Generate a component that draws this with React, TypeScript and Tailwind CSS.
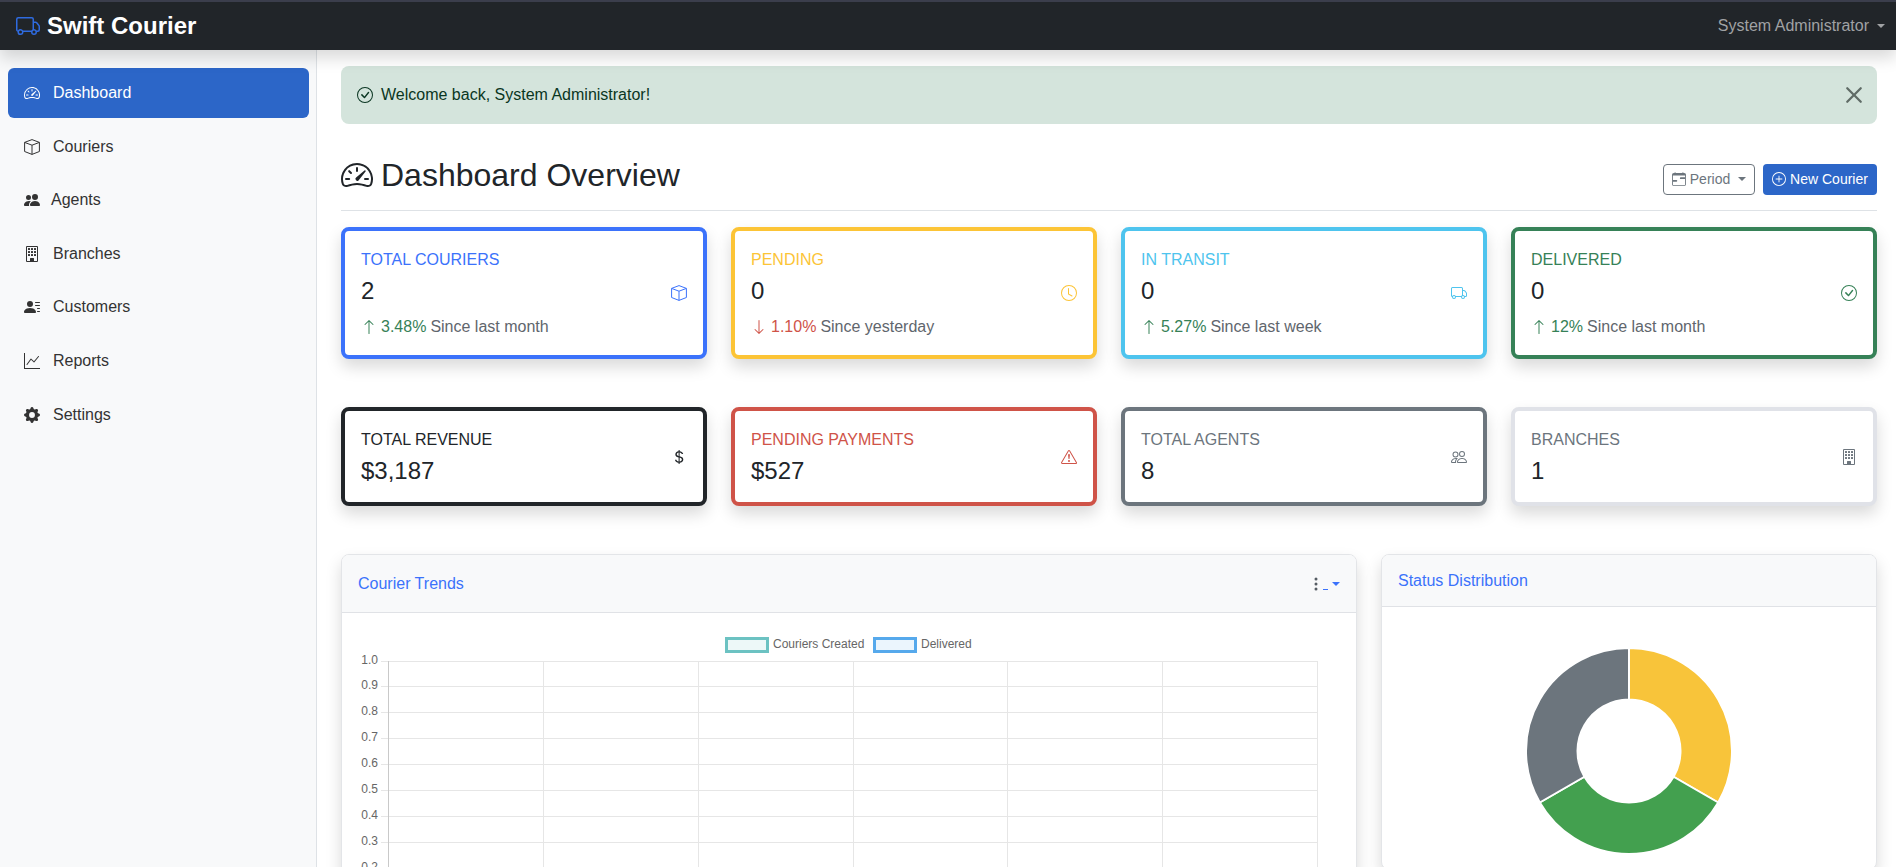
import {
  BsArrowDown,
  BsArrowUp,
  BsBuilding,
  BsCalendarRange,
  BsCheckCircle,
  BsClock,
  BsCurrencyDollar,
  BsExclamationTriangle,
  BsGearFill,
  BsGraphUp,
  BsPeople,
  BsPeopleFill,
  BsPersonLinesFill,
  BsPlusCircle,
  BsSpeedometer2,
  BsThreeDotsVertical,
  BsTruck,
  BsX,
} from "react-icons/bs";

// the package's box is flatter than the one in the design
function BoxIcon({ size = 16, className }: { size?: number; className?: string }) {
  return (
    <svg
      width={size}
      height={size}
      viewBox="0 0 16 16"
      fill="none"
      stroke="currentColor"
      strokeWidth="1"
      strokeLinejoin="round"
      className={className}
    >
      <path d="M8 .6 15.4 3.4V12.5L8 15.4.6 12.5V3.4Z" />
      <path d="M.6 3.4 8 6.2l7.4-2.8M8 6.2v9.2" />
    </svg>
  );
}

const navItems = [
  { label: "Dashboard", icon: BsSpeedometer2, active: true },
  { label: "Couriers", icon: BoxIcon },
  { label: "Agents", icon: BsPeopleFill, tight: true },
  { label: "Branches", icon: BsBuilding },
  { label: "Customers", icon: BsPersonLinesFill },
  { label: "Reports", icon: BsGraphUp },
  { label: "Settings", icon: BsGearFill },
];

const topStats = [
  {
    title: "TOTAL COURIERS",
    value: "2",
    icon: BoxIcon,
    border: "border-[#3b72fb]",
    color: "text-[#3b72fb]",
    change: "3.48%",
    up: true,
    note: "Since last month",
  },
  {
    title: "PENDING",
    value: "0",
    icon: BsClock,
    border: "border-[#fcc436]",
    color: "text-[#fcc436]",
    change: "1.10%",
    up: false,
    note: "Since yesterday",
  },
  {
    title: "IN TRANSIT",
    value: "0",
    icon: BsTruck,
    border: "border-[#4ec4ee]",
    color: "text-[#4ec4ee]",
    change: "5.27%",
    up: true,
    note: "Since last week",
  },
  {
    title: "DELIVERED",
    value: "0",
    icon: BsCheckCircle,
    border: "border-[#368157]",
    color: "text-[#368157]",
    change: "12%",
    up: true,
    note: "Since last month",
  },
];

const bottomStats = [
  {
    title: "TOTAL REVENUE",
    value: "$3,187",
    icon: BsCurrencyDollar,
    border: "border-[#212529]",
    color: "text-[#212529]",
  },
  {
    title: "PENDING PAYMENTS",
    value: "$527",
    icon: BsExclamationTriangle,
    border: "border-[#cf5348]",
    color: "text-[#cf5348]",
  },
  {
    title: "TOTAL AGENTS",
    value: "8",
    icon: BsPeople,
    border: "border-[#6c757d]",
    color: "text-[#6c757d]",
  },
  {
    title: "BRANCHES",
    value: "1",
    icon: BsBuilding,
    border: "border-[#e0e2e8]",
    color: "text-[#6c757d]",
  },
];

const yTicks = [
  { label: "1.0", y: 661.5 },
  { label: "0.9", y: 686.5 },
  { label: "0.8", y: 712.5 },
  { label: "0.7", y: 738.5 },
  { label: "0.6", y: 764.5 },
  { label: "0.5", y: 790.5 },
  { label: "0.4", y: 816.5 },
  { label: "0.3", y: 842.5 },
  { label: "0.2", y: 868.5 },
];
const xGrid = [388.5, 543.5, 698.5, 853.5, 1007.5, 1162.5, 1317.5];

function TrendsChart() {
  // viewBox uses page coordinates so the numbers can be read off the screenshot
  return (
    <svg viewBox="342 613 1014 300" className="block h-[300px] w-[1014px]">
      <rect x="726.5" y="638.5" width="41" height="13" fill="#edf8f8" stroke="#6cc2c2" strokeWidth="3" />
      <text x="773" y="648" fontSize="12" fill="#666">
        Couriers Created
      </text>
      <rect x="874.5" y="638.5" width="41" height="13" fill="#ebf5fd" stroke="#56a9ec" strokeWidth="3" />
      <text x="921" y="648" fontSize="12" fill="#666">
        Delivered
      </text>
      {yTicks.map((tick) => (
        <g key={tick.label}>
          <line x1="381" x2="1318" y1={tick.y} y2={tick.y} stroke="#e6e6e6" />
          <text x="378" y={tick.y + 2.5} fontSize="12" fill="#666" textAnchor="end">
            {tick.label}
          </text>
        </g>
      ))}
      {xGrid.map((x, i) => (
        <line key={x} x1={x} x2={x} y1="661" y2="913" stroke={i === 0 ? "#c9c9c9" : "#e6e6e6"} />
      ))}
    </svg>
  );
}

function StatusDonut() {
  const cx = 1629;
  const cy = 751;
  const outer = 103;
  const inner = 51.5;
  const point = (r: number, deg: number) => {
    const a = ((deg - 90) * Math.PI) / 180;
    return `${cx + r * Math.cos(a)} ${cy + r * Math.sin(a)}`;
  };
  const slice = (from: number, to: number) =>
    `M${point(outer, from)} A${outer} ${outer} 0 0 1 ${point(outer, to)} L${point(inner, to)} A${inner} ${inner} 0 0 0 ${point(inner, from)} Z`;
  return (
    <svg viewBox="1382 607 494 262" className="block h-[262px] w-[494px]">
      <path d={slice(0, 120)} fill="#f8c43a" stroke="#fff" strokeWidth="2" />
      <path d={slice(120, 240)} fill="#43a04f" stroke="#fff" strokeWidth="2" />
      <path d={slice(240, 360)} fill="#6c757d" stroke="#fff" strokeWidth="2" />
    </svg>
  );
}

function StatCard({ stat, tall }: { stat: any; tall?: boolean }) {
  const Icon = stat.icon;
  const Arrow = stat.up ? BsArrowUp : BsArrowDown;
  return (
    <div
      className={`flex items-center justify-between rounded-lg border-4 bg-white p-4 shadow-[0_8px_16px_rgba(0,0,0,0.15)] ${stat.border} ${tall ? "h-[132px]" : "h-[99px]"}`}
    >
      <div>
        <div className={`mb-1 text-base leading-6 ${stat.color}`}>{stat.title}</div>
        <div className="h-[29px] text-2xl leading-[29px] text-[#212529]">{stat.value}</div>
        {stat.note && (
          <div className="mt-2.5 flex items-center text-base leading-6 text-[#5f666d]">
            <Arrow className={stat.up ? "text-[#368157]" : "text-[#cf5348]"} size={16} />
            <span className={`ml-1 mr-1 ${stat.up ? "text-[#368157]" : "text-[#cf5348]"}`}>{stat.change}</span>
            {stat.note}
          </div>
        )}
      </div>
      <Icon className={stat.color} size={16} />
    </div>
  );
}

export default function App() {
  return (
    <div className="flex h-screen flex-col overflow-hidden bg-white font-['Liberation_Sans',Arial,sans-serif] text-[#212529]">
      <nav className="relative z-10 flex h-[50px] shrink-0 items-center justify-between border-t-2 border-[#3b3e4c] bg-[#212529] pl-4 pr-[11px] shadow-[0_8px_16px_rgba(0,0,0,0.15)]">
        <div className="flex items-center text-2xl font-bold text-white">
          <BsTruck className="mr-[7px] text-[#2f6be0]" size={24} />
          Swift Courier
        </div>
        <div className="flex items-center text-base text-[#a0a2a4]">
          System Administrator
          <span className="ml-2 h-0 w-0 border-x-[4.8px] border-t-[4.8px] border-x-transparent border-t-[#a0a2a4]" />
        </div>
      </nav>

      <div className="flex min-h-0 flex-1">
        <aside className="w-[317px] shrink-0 border-r border-[#dee2e6] bg-[#f8f9fa] pl-2 pr-[7px] pt-[18.3px]">
          {navItems.map((item) => {
            const Icon = item.icon;
            return (
              <div
                key={item.label}
                className={`mb-1 flex h-[49.6px] items-center rounded-md pl-4 text-base ${item.active ? "bg-[#2c66c8] text-white" : "text-[#333]"}`}
              >
                <Icon size={16} className={item.tight ? "mr-[11px]" : "mr-[13px]"} />
                {item.label}
              </div>
            );
          })}
        </aside>

        <main className="min-w-0 flex-1 overflow-hidden pl-6 pr-[19px] pt-4">
          <div className="mb-4 flex h-[58px] items-center justify-between rounded-lg bg-[#d4e4dc] pl-4 pr-[5px] text-base text-[#0a3622]">
            <div className="flex items-center">
              <BsCheckCircle size={16} className="mr-2" />
              Welcome back, System Administrator!
            </div>
            <BsX size={36} className="text-[#5f6b66]" />
          </div>

          <div className="mb-4 flex items-center justify-between border-b border-[#dee2e6] pb-2 pt-4">
            <h1 className="mb-2 flex items-center text-[32px] leading-[38.4px] text-[#212529]">
              <BsSpeedometer2 size={32} className="mr-2" />
              Dashboard Overview
            </h1>
            <div className="flex gap-2 text-sm">
              <div className="flex h-[31px] w-[92px] items-center justify-center rounded border border-[#6c757d] text-[#6c757d]">
                <BsCalendarRange size={14} className="mr-1" />
                Period
                <span className="ml-2 h-0 w-0 border-x-[4.2px] border-t-[4.2px] border-x-transparent border-t-[#6c757d]" />
              </div>
              <div className="flex h-[31px] w-[114px] items-center justify-center rounded bg-[#2c66c8] text-white">
                <BsPlusCircle size={14} className="mr-1" />
                New Courier
              </div>
            </div>
          </div>

          <div className="mb-12 grid grid-cols-4 gap-6">
            {topStats.map((stat) => (
              <StatCard key={stat.title} stat={stat} tall />
            ))}
          </div>

          <div className="mb-12 grid grid-cols-4 gap-6">
            {bottomStats.map((stat) => (
              <StatCard key={stat.title} stat={stat} />
            ))}
          </div>

          <div className="flex items-start gap-6">
            <div className="w-[1016px] shrink-0 overflow-hidden rounded-lg border border-[#e3e5e8] bg-white shadow-[0_8px_16px_rgba(0,0,0,0.15)]">
              <div className="flex h-[58px] items-center justify-between border-b border-[#e0e2e6] bg-[#f8f9fa] pl-4 pr-4 text-base text-[#3b72fb]">
                Courier Trends
                <div className="flex items-center">
                  <BsThreeDotsVertical size={16} className="text-[#555c63]" />
                  <span className="ml-[-1px] mt-3 h-px w-[5px] bg-[#3b72fb]" />
                  <span className="ml-1 h-0 w-0 border-x-[4.8px] border-t-[4.8px] border-x-transparent border-t-[#3b72fb]" />
                </div>
              </div>
              <TrendsChart />
            </div>
            <div className="w-[496px] shrink-0 overflow-hidden rounded-lg border border-[#e3e5e8] bg-white shadow-[0_8px_16px_rgba(0,0,0,0.15)]">
              <div className="flex h-[52px] items-center border-b border-[#e0e2e6] bg-[#f8f9fa] pl-4 text-base text-[#3b72fb]">
                Status Distribution
              </div>
              <StatusDonut />
            </div>
          </div>
        </main>
      </div>
    </div>
  );
}
